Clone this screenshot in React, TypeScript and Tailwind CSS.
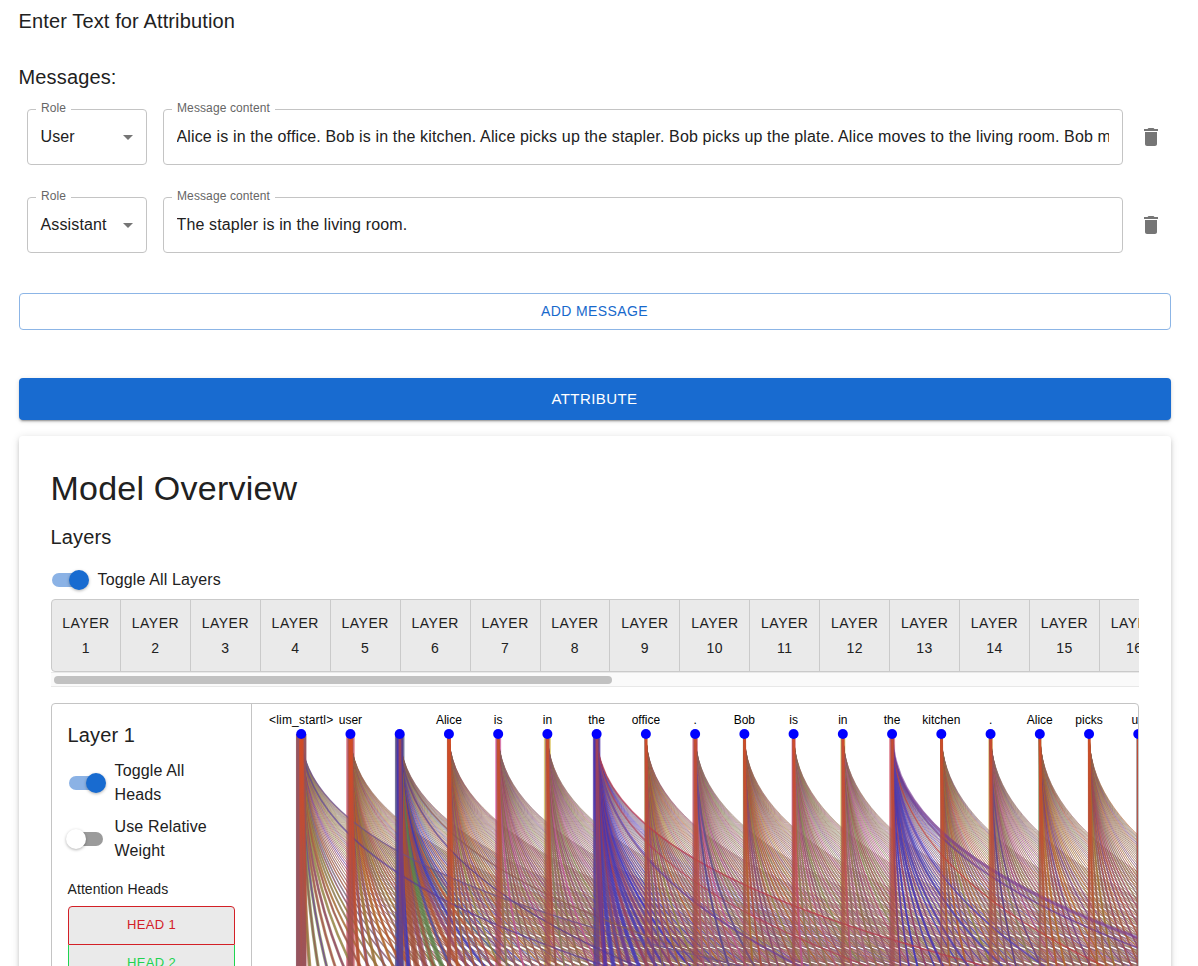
import React from "react";

const F = "font-['Liberation_Sans',Arial,sans-serif]";
const tokens = ["<lim_startl>", "user", "", "Alice", "is", "in", "the", "office", ".", "Bob", "is", "in", "the", "kitchen", ".", "Alice", "picks", "up"];
const TOTAL = 53;
const STEP = 49.24;
const X0 = 49.2;
const TOP = 30;
const BOTTOM = 780;
const MID = (TOP + BOTTOM) / 2;

function mulberry(seed: number) {
  return () => {
    seed = (seed + 0x6d2b79f5) | 0;
    let t = Math.imul(seed ^ (seed >>> 15), 1 | seed);
    t = (t + Math.imul(t ^ (t >>> 7), 61 | t)) ^ t;
    return ((t ^ (t >>> 14)) >>> 0) / 4294967296;
  };
}

const start = ["#8c5348", "#9a4a52", "#8a9a50", "#a8743a", "#8f4468", "#a06a38", "#7c8a48", "#6a3a90"];
const warm = ["#b0662a", "#a8602c", "#9b4a5c", "#8f7a3c", "#b4502e", "#7a4478", "#8c5a50"];
const soft = ["#8a7a60", "#8d6f6c", "#86845c", "#96706a", "#7a5a80", "#94804c", "#8a6a58"];
const cool = ["#3c30c0", "#6a3a90", "#5a4a9a", "#7b3f86", "#4436b0", "#9a3a50", "#4a3cb0"];
const pink = ["#9c6060", "#b8548c", "#8a6a60", "#94504a", "#8a4470", "#84804c"];
const mixed = ["#3f38b0", "#3c48a8", "#a0503c", "#5c8048", "#8a4468", "#b05030"];
const palettes = [start, warm, mixed, warm, pink, pink, cool, warm, pink, warm, pink, pink, cool, warm, pink, warm, warm, warm];

const outer = [10.5, 8.5, 9.5, 4, 6, 7, 7.5, 3, 5.5, 3, 4, 5, 6, 2, 4.5, 3, 2, 4];
const edge = ["#8e5560", "#d86c7c", "#5a5a8a", "#b05a3c", "#e070b0", "#dcc868", "#5a40b0", "#9a9a50", "#d07088", "#8aa870", "#d070a0", "#dccc68", "#e08090", "#7a7a70", "#dcb868", "#70dca0", "#a06040", "#8a7a80"];

const accents: [number, number, string, number][] = [
  [6, 52, "#c03848", 1.6],
  [6, 38, "#b03c58", 1.5],
  [6, 30, "#6a3a98", 2],
  [12, 51, "#7a3c98", 3],
  [12, 47, "#6a3a98", 2],
  [12, 37, "#c43838", 1.3],
  [12, 30, "#5a40b0", 2],
  [12, 25, "#5040b0", 2.4],
  [12, 21, "#5040b0", 2.4],
  [12, 18, "#4838b0", 2.4],
  [14, 17, "#4a40a8", 1.6],
  [14, 20, "#5a4098", 1.5],
  [8, 12, "#4a40a8", 2],
  [8, 15, "#5a4098", 2],
  [2, 30, "#5a3a88", 1.6],
  [2, 42, "#8a5a50", 1.5],
  [0, 52, "#6a5090", 1.4],
  [0, 36, "#5a3a98", 1.6],
];

function curve(i: number, j: number) {
  const a = X0 + i * STEP;
  const b = X0 + j * STEP;
  return `M${a} ${TOP}C${a} ${MID} ${b} ${MID} ${b} ${BOTTOM}`;
}

function Graph() {
  const rnd = mulberry(11);
  const lines: React.ReactNode[] = [];
  tokens.forEach((_, i) => {
    for (let j = TOTAL - 1; j > i; j--) {
      const dist = j - i;
      const pal = dist > 20 && rnd() < 0.7 ? soft : palettes[i];
      const c = pal[Math.floor(rnd() * pal.length)];
      const c2 = palettes[i][Math.floor(rnd() * palettes[i].length)];
      const near = Math.max(0, 1 - dist / 16);
      const blue = i === 6 || i === 2 ? near * 3 : 0;
      const w = 1 + near * (i < 3 ? 2.6 : 1.3) + blue;
      const o = 0.38 + 0.37 * Math.max(0, 1 - dist / 42);
      lines.push(<path key={`${i}-${j}a`} d={curve(i, j)} stroke={c} strokeWidth={w} opacity={o} />);
      lines.push(<path key={`${i}-${j}b`} d={curve(i, j)} stroke={c2} strokeWidth={w * 0.55} opacity={o} />);
    }
  });
  return (
    <svg width="886" height="264" viewBox="0 0 886 264" fill="none" className="block">
      <defs>
        <linearGradient id="flare" gradientUnits="userSpaceOnUse" x1="0" y1="30" x2="0" y2="264">
          <stop offset="0" stopColor="#d84c20" stopOpacity="0.95" />
          <stop offset="0.4" stopColor="#cc4a2c" stopOpacity="0.7" />
          <stop offset="1" stopColor="#b85040" stopOpacity="0.15" />
        </linearGradient>
      </defs>
      {tokens.map((_, i) => {
        const x = X0 + i * STEP;
        return <path key={i} d={`M${x} ${TOP}V264`} stroke={edge[i]} strokeWidth={outer[i]} opacity={0.85} />;
      })}
      {lines}
      {accents.map(([i, j, c, w]) => (
        <path key={`${i}-${j}`} d={curve(i, j)} stroke={c} strokeWidth={w} opacity={0.65} />
      ))}
      {tokens.map((_, i) => {
        const x = X0 + i * STEP;
        const o = outer[i];
        const blue = i === 2 || i === 6;
        return (
          <g key={i}>
            <path d={`M${x} ${TOP}V264`} stroke={blue ? "#4a3c9c" : "#94505a"} strokeWidth={i === 0 ? o - 1 : o * 0.7} opacity={i < 3 ? 0.85 : 0.6} />
            {blue && <path d={`M${x - 1} ${TOP}Q${x - 1} 160 ${x + 9} 264`} stroke="#3a30c4" strokeWidth="4" opacity={0.55} />}
            <path
              d={`M${x - 0.8} ${TOP}H${x + 1.2}Q${x + 1.4} 90 ${x + 3.5} 150L${x + 7} 264H${x - 0.5}Z`}
              fill="url(#flare)"
              stroke="url(#flare)"
              strokeWidth={i < 2 ? 2.4 : i === 3 ? 1.6 : 0.6}
              opacity={blue ? 0.65 : 0.9}
            />
          </g>
        );
      })}
      {tokens.map((t, i) => (
        <g key={i}>
          <circle cx={X0 + i * STEP} cy={TOP} r="5" fill="#00f" />
          <text x={X0 + i * STEP} y={TOP - 10} textAnchor="middle" fontSize="12" fill="#000" letterSpacing={i === 0 ? 0.2 : 0}>{t}</text>
        </g>
      ))}
    </svg>
  );
}

function Switch({ on }: { on: boolean }) {
  return (
    <svg width="57.5" height="38" viewBox="0 0 57.5 38" className="block shrink-0 overflow-visible">
      <rect x="12" y="12" width="34" height="14" rx="7" fill={on ? "#8bb2e5" : "#9b9b9b"} />
      <circle cx={on ? 39 : 19} cy="19" r="10" fill={on ? "#186bd0" : "#fff"} className="drop-shadow-[0_1px_1.5px_rgba(0,0,0,0.3)]" />
    </svg>
  );
}

function Field({ label, className, children }: { label: string; className: string; children: React.ReactNode }) {
  return (
    <div className={`relative h-14 rounded border border-[#c4c4c4] ${className}`}>
      <span className="absolute -top-[9px] left-2 bg-white px-[5px] text-[12px] leading-[14px] tracking-[0.11px] text-[#666]">{label}</span>
      {children}
    </div>
  );
}

function Message({ role, text }: { role: string; text: string }) {
  return (
    <div className="flex h-[88px] items-start pl-2">
      <Field label="Role" className="w-[120px]">
        <div className="flex h-[54px] items-center justify-between pr-[6px] pl-[12.5px] text-[16px] tracking-[0.14px]">
          {role}
          <svg width="24" height="24" viewBox="0 0 24 24" fill="#757575"><path d="M7 10l5 5 5-5z" /></svg>
        </div>
      </Field>
      <Field label="Message content" className="ml-4 w-[960px]">
        <div className="mr-[13px] ml-[12.5px] flex h-[54px] items-center overflow-hidden whitespace-nowrap text-[16px] tracking-[0.145px]">{text}</div>
      </Field>
      <svg width="24" height="24" viewBox="0 0 24 24" fill="#757575" className="mt-4 ml-4"><path d="M6 19c0 1.1.9 2 2 2h8c1.1 0 2-.9 2-2V7H6v12zM19 4h-3.5l-1-1h-5l-1 1H5v2h14V4z" /></svg>
    </div>
  );
}

export default function App() {
  return (
    <div className={`h-[966px] overflow-hidden bg-white pr-[27px] pl-[19px] text-[#212121] ${F}`}>
      <h6 className="-ml-[0.5px] pt-[5px] text-[20px] leading-8 tracking-[0.13px]">Enter Text for Attribution</h6>
      <h6 className="mt-6 -ml-[0.5px] text-[20px] leading-8 tracking-[0.15px]">Messages:</h6>
      <div className="mt-4">
        <Message role="User" text="Alice is in the office. Bob is in the kitchen. Alice picks up the stapler. Bob picks up the plate. Alice moves to the living room. Bob moves to the kitchen." />
        <Message role="Assistant" text="The stapler is in the living room." />
      </div>
      <button className="mt-2 flex h-[37px] w-full items-center justify-center rounded border border-[#8cb5e6] pr-px text-[14px] tracking-[0.4px] text-[#1769cc]">ADD MESSAGE</button>
      <button className="mt-12 flex h-[42px] w-full items-center justify-center rounded bg-[#186bd0] pr-px text-[15px] tracking-[0.43px] text-white shadow-[0_3px_1px_-2px_rgba(0,0,0,0.2),0_2px_2px_rgba(0,0,0,0.14),0_1px_5px_rgba(0,0,0,0.12)]">ATTRIBUTE</button>
      <section className="mt-4 h-[600px] rounded px-8 pt-8 shadow-[0_3px_3px_-2px_rgba(0,0,0,0.2),0_3px_4px_rgba(0,0,0,0.14),0_1px_8px_rgba(0,0,0,0.12)]">
        <h4 className="-mt-px -ml-[0.5px] text-[34px] leading-[42px] tracking-[0.22px]">Model Overview</h4>
        <h6 className="mt-3 -ml-[0.5px] text-[20px] leading-8 tracking-[0.13px]">Layers</h6>
        <div className="mt-2 -ml-[11px] flex h-[38px] items-center text-[16px] tracking-[0.14px]"><Switch on />Toggle All Layers</div>
        <div className="overflow-hidden">
          <div className="flex h-[73px] w-[2240px] rounded border border-[#cacaca] bg-[#eaeaea]">
            {Array.from({ length: 32 }, (_, i) => (
              <div key={i} className="w-[69.93px] shrink-0 border-r border-[#cacaca] pt-[11px] text-center text-[14px] leading-[25px] tracking-[0.5px] first:w-[69px]">
                <div>LAYER</div>
                <div>{i + 1}</div>
              </div>
            ))}
          </div>
          <div className="h-[15px] border-y border-[#e8e8e8] bg-[#fafafa] pt-[3px] pl-[3px]"><div className="h-2 w-[558px] rounded-full bg-[#c1c1c1]" /></div>
        </div>
        <div className="mt-4 flex h-[400px] overflow-hidden rounded border border-[#c4c4c4]">
          <aside className="w-[200px] shrink-0 border-r border-[#c4c4c4] px-4 pt-[15px]">
            <h6 className="-ml-[0.5px] text-[20px] leading-8 tracking-[0.13px]">Layer 1</h6>
            <div className="mt-2 -ml-[11px] flex items-center text-[16px] leading-6 tracking-[0.14px]"><Switch on /><span>Toggle All<br />Heads</span></div>
            <div className="mt-2 -ml-[11px] flex items-center text-[16px] leading-6 tracking-[0.14px]"><Switch on={false} /><span>Use Relative<br />Weight</span></div>
            <div className="mt-[15px] -ml-[0.5px] text-[14px] leading-[22px] tracking-[0.08px]">Attention Heads</div>
            <div className="mt-[6px] flex h-[39px] items-center justify-center rounded-t border border-[#d32027] bg-[#eaeaea] pb-[2px] text-[13px] tracking-[0.37px] text-[#d32027]">HEAD 1</div>
            <div className="flex h-[38px] items-center justify-center border border-t-0 border-[#20d350] bg-[#eaeaea] pb-[2px] text-[13px] tracking-[0.37px] text-[#20d350]">HEAD 2</div>
          </aside>
          <div className="min-w-0 grow overflow-hidden"><Graph /></div>
        </div>
      </section>
    </div>
  );
}
